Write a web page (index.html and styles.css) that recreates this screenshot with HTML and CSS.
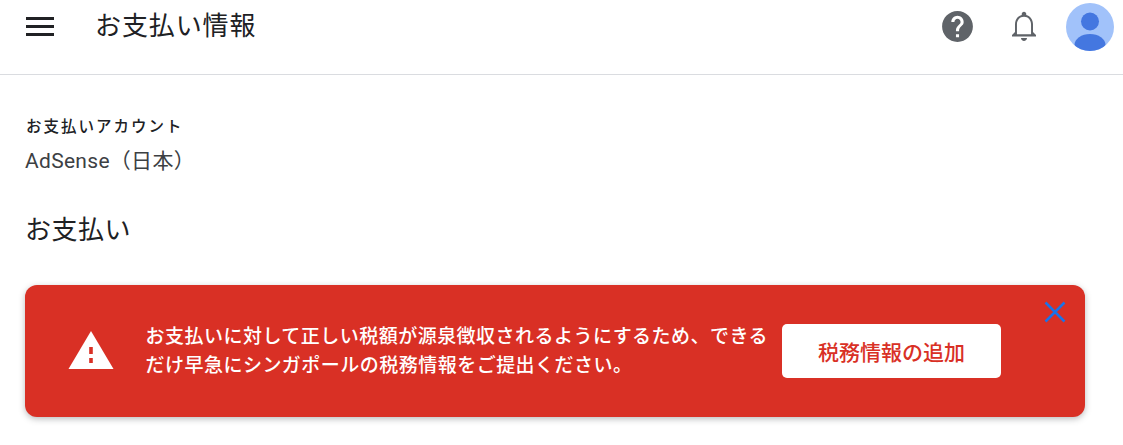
FILE: index.html
```html
<!DOCTYPE html>
<html lang="ja">
<head>
<meta charset="utf-8">
<title>お支払い情報</title>
<link rel="stylesheet" href="styles.css">
</head>
<body>
<header class="topbar">
  <div class="menu-icon"><span></span><span></span><span></span></div>
  <h1 class="page-title">お支払い情報</h1>
  <div class="top-actions">
    <svg class="icon-help" viewBox="0 0 24 24" width="37" height="37"><path fill="#5f6368" d="M12 2C6.48 2 2 6.48 2 12s4.48 10 10 10 10-4.48 10-10S17.52 2 12 2zm1 17h-2v-2h2v2zm2.07-7.75l-.9.92C13.45 12.9 13 13.5 13 15h-2v-.5c0-1.1.45-2.1 1.17-2.83l1.24-1.26c.37-.36.59-.86.59-1.41 0-1.1-.9-2-2-2s-2 .9-2 2H8c0-2.21 1.79-4 4-4s4 1.79 4 4c0 .88-.36 1.68-.93 2.25z"/></svg>
    <svg class="icon-bell" viewBox="0 0 24 24" width="36" height="36"><path fill="#5f6368" d="M12 22c1.100 0 2-.9 2-2h-4c0 1.100.9 2 2 2zm6-6v-5c0-3.070-1.630-5.640-4.500-6.320V4c0-.83-.67-1.500-1.500-1.500s-1.500.67-1.500 1.500v.68C7.640 5.360 6 7.920 6 11v5l-2 2v1h16v-1l-2-2zm-1.300 1.500H7.300V11c0-2.800 1.800-5.100 4.700-5.100s4.700 2.300 4.700 5.100z"/></svg>
    <svg class="avatar" viewBox="0 0 48 48" width="48" height="48"><defs><clipPath id="avatar-clip"><circle cx="24" cy="24" r="24"/></clipPath></defs><circle cx="24" cy="24" r="24" fill="#a1c2fa"/><g clip-path="url(#avatar-clip)" fill="#4477e0"><circle cx="24" cy="18.500" r="9"/><ellipse cx="24" cy="42" rx="15.500" ry="11"/></g></svg>
  </div>
</header>
<main class="content">
  <section class="account">
    <div class="account-label">お支払いアカウント</div>
    <div class="account-name">AdSense（日本）</div>
  </section>
  <h2 class="section-title">お支払い</h2>
  <section class="alert">
    <svg class="alert-icon" viewBox="0 0 46 40" width="46" height="40"><path fill="#fff" d="M23 0 45.500 38H.5z"/><path fill="#d93025" d="M21.200 16h3.600v7h-3.600zM21.200 27h3.600v5h-3.600z"/></svg>
    <p class="alert-text">お支払いに対して正しい税額が源泉徴収されるようにするため、できるだけ早急にシンガポールの税務情報をご提出ください。</p>
    <button class="alert-button">税務情報の追加</button>
    <svg class="alert-close" viewBox="0 0 22 22" width="22" height="22"><path fill="none" stroke="#1a73e8" stroke-width="2.500" d="M1.500 1.500l19 19M20.500 1.500l-19 19"/></svg>
  </section>
</main>
</body>
</html>
```
FILE: styles.css
```css
* { box-sizing: border-box; }
html, body { margin: 0; padding: 0; }
body {
  width: 1123px;
  height: 445px;
  overflow: hidden;
  background: #fff;
  font-family: Roboto, "Noto Sans CJK JP", sans-serif;
  color: #202124;
}
.topbar {
  display: flex;
  align-items: center;
  height: 75px;
  padding: 0 9px 22px 26px;
  border-bottom: 1px solid #dadce0;
}
.menu-icon {
  display: flex;
  flex-direction: column;
  gap: 5px;
  width: 28px;
}
.menu-icon span {
  display: block;
  height: 3px;
  background: #202124;
}
.page-title {
  margin: 0 0 0 41px;
  font-size: 26px;
  font-weight: 400;
  line-height: 36px;
  letter-spacing: 0.900px;
}
.top-actions {
  display: flex;
  align-items: center;
  margin-left: auto;
}
.icon-help { margin-top: 1px; }
.icon-bell { margin-left: 30px; margin-right: 1px; }
.avatar { margin-left: 23px; margin-top: 2px; }
.content { padding: 41px 38px 0 25px; }
.account-label {
  font-size: 15.500px;
  font-weight: 500;
  line-height: 22px;
  letter-spacing: 2px;
  margin-left: 1px;
}
.account-name {
  margin-top: 9px;
  font-size: 21px;
  line-height: 29px;
  letter-spacing: 0.300px;
  color: #3c4043;
}
.section-title {
  margin: 36px 0 0;
  font-size: 26px;
  font-weight: 400;
  line-height: 36px;
  letter-spacing: 0.500px;
}
.alert {
  position: relative;
  display: flex;
  align-items: center;
  width: 1060px;
  height: 132px;
  margin-top: 37px;
  padding-left: 43px;
  background: #d93025;
  border-radius: 12px;
  box-shadow: 0 2px 6px rgba(60, 64, 67, 0.35);
}
.alert-icon { flex: none; }
.alert-text {
  width: 628.500px;
  margin: 0 0 0 31.500px;
  font-size: 19px;
  line-height: 29px;
  letter-spacing: 0.480px;
  font-weight: 500;
  color: #fff;
}
.alert-button {
  flex: none;
  width: 219px;
  height: 54px;
  margin-left: 8px;
  padding: 0;
  border: 0;
  border-radius: 5px;
  background: #fff;
  color: #d93025;
  font-family: inherit;
  font-size: 21px;
  font-weight: 500;
}
.alert-close {
  position: absolute;
  top: 16px;
  right: 19px;
}
```
